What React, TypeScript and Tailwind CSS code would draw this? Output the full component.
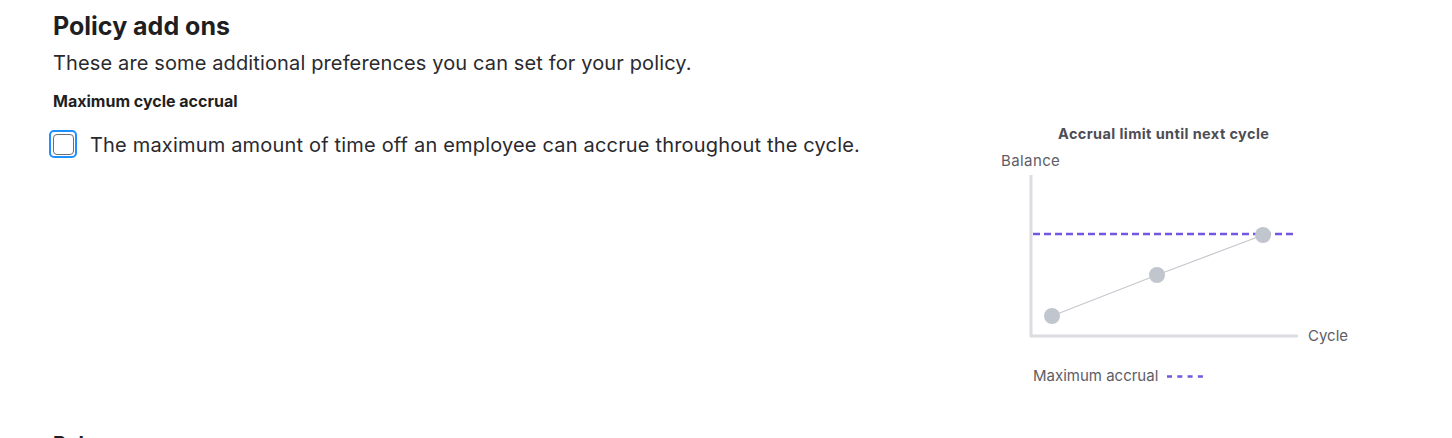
import React from "react";

const FONT = { fontFamily: 'Inter, "Liberation Sans", Arial, sans-serif' };

function AccrualChart() {
  const purple = "#7357e0";
  const axis = "#dcdce1";
  const dot = "#c1c5cd";
  const label = "#5d5d66";
  const labelStyle = { ...FONT, letterSpacing: "0.4px" };
  return (
    <div className="w-[360px] flex flex-col">
      <div className="self-start ml-[63px] text-[14.5px] tracking-[0.4px] font-bold leading-[18px] text-[#4d4d55]">
        Accrual limit until next cycle
      </div>
      <svg width="360" height="255" viewBox="0 0 360 255" className="mt-[2px] block">
        <text x="6" y="21" fontSize="15" fill={label} style={labelStyle}>
          Balance
        </text>
        {/* axes */}
        <line x1="36" y1="30" x2="36" y2="192" stroke={axis} strokeWidth="3" />
        <line x1="35" y1="191" x2="303" y2="191" stroke={axis} strokeWidth="3" />
        <text x="313" y="196" fontSize="15" fill={label} style={FONT}>
          Cycle
        </text>
        {/* maximum accrual limit */}
        <line
          x1="38"
          y1="89"
          x2="301"
          y2="89"
          stroke={purple}
          strokeWidth="2.4"
          strokeDasharray="7 4"
        />
        {/* balance growth */}
        <polyline points="57,171 162,130 268,90" fill="none" stroke="#c6c8ce" strokeWidth="1.2" />
        <circle cx="57" cy="171" r="8" fill={dot} />
        <circle cx="162" cy="130" r="8" fill={dot} />
        <circle cx="268" cy="90" r="8" fill={dot} />
        {/* legend */}
        <text x="38" y="236" fontSize="15" fill={label} style={FONT}>
          Maximum accrual
        </text>
        <line
          x1="172"
          y1="231.5"
          x2="211"
          y2="231.5"
          stroke={purple}
          strokeWidth="2.4"
          strokeDasharray="5 5.3"
        />
      </svg>
    </div>
  );
}

export default function App() {
  return (
    <div
      className="w-full h-[438px] overflow-hidden bg-white text-[#1f1f22] pl-[53px] pr-[97px] pt-[10px]"
      style={FONT}
    >
      <h2 className="text-[25px] font-bold leading-[32px]">Policy add ons</h2>
      <p className="mt-[8px] text-[20px] leading-[26px] tracking-[0.13px] text-[#2a2a2e]">
        These are some additional preferences you can set for your policy.
      </p>
      <h3 className="mt-[15px] text-[16px] font-bold leading-[20px]">Maximum cycle accrual</h3>
      <div className="flex justify-between mt-[14px]">
        <label className="flex items-start gap-[13px] -ml-[4px] pt-[5px]">
          <span className="flex items-center justify-center w-[28px] h-[28px] rounded-[5px] border-[2.5px] border-[#1e90ff] p-[1px]">
            <span className="w-[21px] h-[21px] rounded-[4px] border-[1.5px] border-[#6e6e75] bg-white" />
          </span>
          <span className="mt-[1px] text-[20px] leading-[28px] tracking-[0.18px] text-[#2a2a2e]">
            The maximum amount of time off an employee can accrue throughout the cycle.
          </span>
        </label>
        <AccrualChart />
      </div>
      <h3 className="mt-[31px] text-[20px] font-bold leading-[26px]">Rules</h3>
    </div>
  );
}
